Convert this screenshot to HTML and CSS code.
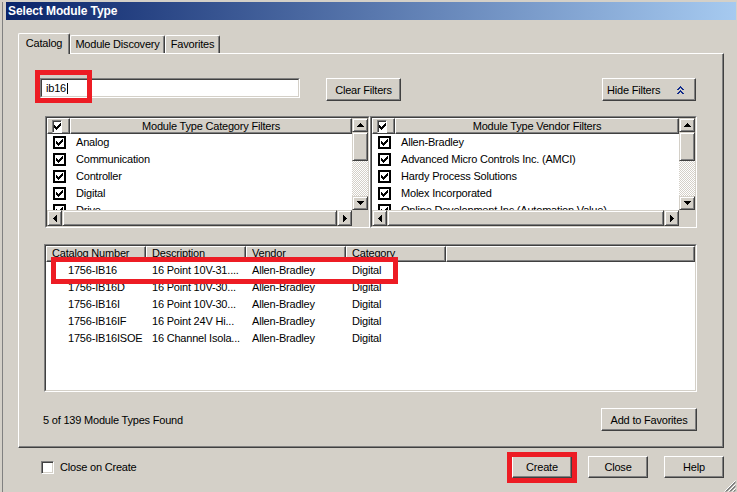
FILE: index.html
```html
<!DOCTYPE html>
<html>
<head>
<meta charset="utf-8">
<title>Select Module Type</title>
<link rel="stylesheet" href="styles.css">
</head>
<body>
<svg class="defs" width="0" height="0" aria-hidden="true">
  <symbol id="chk" viewBox="0 0 7 7"><path d="M6 0h1v1h-1z M5 1h2v1h-2z M0 2h1v1h-1z M4 2h3v1h-3z M0 3h2v1h-2z M3 3h3v1h-3z M0 4h5v1h-5z M1 5h3v1h-3z M2 6h1v1h-1z"/></symbol>
  <symbol id="up" viewBox="0 0 7 4"><path d="M3 0h1v1h1v1h1v1h1v1H0V3h1V2h1V1h1z"/></symbol>
  <symbol id="down" viewBox="0 0 7 4"><path d="M0 0h7v1H6v1H5v1H4v1H3V3H2V2H1V1H0z"/></symbol>
  <symbol id="left" viewBox="0 0 4 7"><path d="M3 0h1v7H3V6H2V5H1V4H0V3h1V2h1V1h1z"/></symbol>
  <symbol id="right" viewBox="0 0 4 7"><path d="M0 0h1v1h1v1h1v1h1v1H3v1H2v1H1v1H0z"/></symbol>
</svg>
<div class="window">
  <div class="frame">
    <div class="titlebar">Select Module Type</div>
    <div class="tabs">
      <div class="tab tab-active">Catalog</div>
      <div class="tab tab-md">Module Discovery</div>
      <div class="tab tab-fav">Favorites</div>
    </div>
    <div class="panel">
      <div class="search-row">
        <div class="field-wrap">
          <div class="textfield"><div class="textfield-in">ib16<span class="caret"></span></div></div>
          <div class="mark mark-search"></div>
        </div>
        <button class="btn btn-clear">Clear Filters</button>
        <button class="btn btn-hide"><span>Hide Filters</span>
          <svg class="chev" width="7" height="8" viewBox="0 0 7 8"><path d="M3 0h1v1H3z M2 1h3v1H2z M1 2h2v1H1z M4 2h2v1H4z M0 3h2v1H0z M5 3h2v1H5z M3 4h1v1H3z M2 5h3v1H2z M1 6h2v1H1z M4 6h2v1H4z M0 7h2v1H0z M5 7h2v1H5z"/></svg>
        </button>
      </div>

      <div class="filter-row">
        <div class="fbox fbox-cat">
          <div class="fbox-in">
            <div class="fmain">
              <div class="fhead">
                <div class="fhead-chk"><span class="chk3d"><svg class="ck"><use href="#chk"/></svg></span></div>
                <div class="fhead-title">Module Type Category Filters</div>
              </div>
              <div class="fitem"><span class="cb"><svg class="ck"><use href="#chk"/></svg></span><span class="flabel">Analog</span></div>
              <div class="fitem"><span class="cb"><svg class="ck"><use href="#chk"/></svg></span><span class="flabel">Communication</span></div>
              <div class="fitem"><span class="cb"><svg class="ck"><use href="#chk"/></svg></span><span class="flabel">Controller</span></div>
              <div class="fitem"><span class="cb"><svg class="ck"><use href="#chk"/></svg></span><span class="flabel">Digital</span></div>
              <div class="fitem"><span class="cb"><svg class="ck"><use href="#chk"/></svg></span><span class="flabel">Drive</span></div>
            </div>
            <div class="vscroll">
              <div class="sbtn sbtn-v"><svg class="arr-v"><use href="#up"/></svg></div>
              <div class="sthumb-v"></div>
              <div class="strack"></div>
              <div class="sbtn sbtn-v"><svg class="arr-v"><use href="#down"/></svg></div>
            </div>
            <div class="hscroll">
              <div class="sbtn sbtn-h"><svg class="arr-h"><use href="#left"/></svg></div>
              <div class="sthumb-h"></div>
              <div class="sbtn sbtn-h"><svg class="arr-h"><use href="#right"/></svg></div>
            </div>
            <div class="corner"></div>
          </div>
        </div>

        <div class="fbox fbox-ven">
          <div class="fbox-in">
            <div class="fmain">
              <div class="fhead">
                <div class="fhead-chk"><span class="chk3d"><svg class="ck"><use href="#chk"/></svg></span></div>
                <div class="fhead-title">Module Type Vendor Filters</div>
              </div>
              <div class="fitem"><span class="cb"><svg class="ck"><use href="#chk"/></svg></span><span class="flabel">Allen-Bradley</span></div>
              <div class="fitem"><span class="cb"><svg class="ck"><use href="#chk"/></svg></span><span class="flabel">Advanced Micro Controls Inc. (AMCI)</span></div>
              <div class="fitem"><span class="cb"><svg class="ck"><use href="#chk"/></svg></span><span class="flabel">Hardy Process Solutions</span></div>
              <div class="fitem"><span class="cb"><svg class="ck"><use href="#chk"/></svg></span><span class="flabel">Molex Incorporated</span></div>
              <div class="fitem"><span class="cb"><svg class="ck"><use href="#chk"/></svg></span><span class="flabel">Online Development Inc (Automation Value)</span></div>
            </div>
            <div class="vscroll">
              <div class="sbtn sbtn-v"><svg class="arr-v"><use href="#up"/></svg></div>
              <div class="sthumb-v"></div>
              <div class="strack"></div>
              <div class="sbtn sbtn-v"><svg class="arr-v"><use href="#down"/></svg></div>
            </div>
            <div class="hscroll">
              <div class="sbtn sbtn-h"><svg class="arr-h"><use href="#left"/></svg></div>
              <div class="sthumb-h"></div>
              <div class="sbtn sbtn-h"><svg class="arr-h"><use href="#right"/></svg></div>
            </div>
            <div class="corner"></div>
          </div>
        </div>
      </div>

      <div class="lv">
        <div class="lv-in">
          <div class="lv-head">
            <div class="lv-hcell"><span>Catalog Number</span></div>
            <div class="lv-hcell"><span>Description</span></div>
            <div class="lv-hcell"><span>Vendor</span></div>
            <div class="lv-hcell"><span>Category</span></div>
            <div class="lv-hcell lv-hfill"></div>
          </div>
          <div class="lv-row"><span class="c c-cat">1756-IB16</span><span class="c">16 Point 10V-31....</span><span class="c">Allen-Bradley</span><span class="c">Digital</span></div>
          <div class="lv-row"><span class="c c-cat">1756-IB16D</span><span class="c">16 Point 10V-30...</span><span class="c">Allen-Bradley</span><span class="c">Digital</span></div>
          <div class="lv-row"><span class="c c-cat">1756-IB16I</span><span class="c">16 Point 10V-30...</span><span class="c">Allen-Bradley</span><span class="c">Digital</span></div>
          <div class="lv-row"><span class="c c-cat">1756-IB16IF</span><span class="c">16 Point 24V Hi...</span><span class="c">Allen-Bradley</span><span class="c">Digital</span></div>
          <div class="lv-row"><span class="c c-cat">1756-IB16ISOE</span><span class="c">16 Channel Isola...</span><span class="c">Allen-Bradley</span><span class="c">Digital</span></div>
        </div>
        <div class="mark mark-row"></div>
      </div>

      <div class="status-row">
        <div class="status-text">5 of 139 Module Types Found</div>
        <button class="btn btn-fav">Add to Favorites</button>
      </div>
    </div>

    <div class="bottom-row">
      <span class="cb3d"></span>
      <span class="cb-label">Close on Create</span>
      <div class="actions">
        <div class="create-wrap">
          <button class="btn btn-act">Create</button>
          <div class="mark mark-create"></div>
        </div>
        <button class="btn btn-act">Close</button>
        <button class="btn btn-act">Help</button>
      </div>
    </div>
  </div>
  <svg class="grip" width="12" height="12" viewBox="0 0 12 12">
    <path stroke="#ffffff" stroke-width="1" d="M11.5 0.5L0.5 11.5 M11.5 4.5L4.5 11.5 M11.5 8.5L8.5 11.5"/>
    <path stroke="#808080" stroke-width="1" d="M11.5 1.5L1.5 11.5 M11.5 2.5L2.5 11.5 M11.5 5.5L5.5 11.5 M11.5 6.5L6.5 11.5 M11.5 9.5L9.5 11.5 M11.5 10.5L10.5 11.5"/>
  </svg>
</div>
</body>
</html>
```

FILE: styles.css
```css
* { box-sizing: border-box; }
html, body { margin: 0; padding: 0; }
body {
  background: #d4d0c8;
  font-family: "Liberation Sans", Arial, sans-serif;
  font-size: 11px;
  letter-spacing: -0.2px;
  color: #000;
}
.defs { position: absolute; width: 0; height: 0; overflow: hidden; }

.window {
  position: relative;
  width: 737px;
  height: 492px;
  padding: 2px 1px 0 2px;
  overflow: hidden;
}
.frame {
  height: 490px;
  border-left: 1px solid #808080;
  padding-left: 3px;
  display: flex;
  flex-direction: column;
}
.titlebar {
  height: 18px;
  line-height: 18px;
  padding-left: 2px;
  color: #fff;
  font-weight: bold;
  font-size: 12px;
  letter-spacing: -0.1px;
  background: linear-gradient(to right, #0a246a, #a6caf0);
  flex: none;
}

/* tabs */
.tabs {
  display: flex;
  align-items: flex-end;
  height: 20px;
  margin: 13px 0 0 12px;
  position: relative;
  z-index: 1;
  flex: none;
}
.tab {
  background: #d4d0c8;
  border-top: 1px solid #fff;
  border-left: 1px solid #fff;
  border-right: 1px solid #404040;
  box-shadow: inset -1px 0 #808080;
  border-radius: 2px 2px 0 0;
  text-align: center;
  line-height: 13px;
  white-space: nowrap;
}
.tab-active { width: 52px; height: 21px; margin-bottom: -1px; padding-top: 3px; }
.tab-md { width: 95px; height: 18px; padding-top: 2px; }
.tab-fav { width: 55px; height: 18px; padding-top: 2px; }

/* panel */
.panel {
  width: 706px;
  height: 395px;
  margin-left: 12px;
  border: 1px solid;
  border-color: #fff #404040 #404040 #fff;
  box-shadow: inset -1px -1px #808080;
  display: flex;
  flex-direction: column;
  flex: none;
}

/* buttons */
.btn {
  font: inherit;
  letter-spacing: inherit;
  color: #000;
  background: #d4d0c8;
  margin: 0;
  padding: 0;
  border: 1px solid;
  border-color: #fff #404040 #404040 #fff;
  box-shadow: inset -1px -1px #808080;
  text-align: center;
  white-space: nowrap;
  flex: none;
}

.search-row {
  display: flex;
  align-items: flex-start;
  height: 23px;
  margin: 24px 27px 0 21px;
  flex: none;
}
.field-wrap { position: relative; flex: none; }
.textfield {
  width: 260px;
  height: 20px;
  border: 1px solid;
  border-color: #808080 #fff #fff #808080;
}
.textfield-in {
  height: 18px;
  border: 1px solid;
  border-color: #404040 #d4d0c8 #d4d0c8 #404040;
  background: #fff;
  padding: 1px 0 0 4px;
  line-height: 14px;
  white-space: nowrap;
}
.caret {
  display: inline-block;
  width: 1px;
  height: 11px;
  background: #000;
  margin-left: 1px;
  vertical-align: -2px;
}
.btn-clear { width: 75px; height: 23px; margin-left: 26px; }
.btn-hide {
  width: 94px;
  height: 23px;
  margin-left: auto;
  display: flex;
  align-items: center;
  justify-content: space-between;
  padding: 0 11px 0 4px;
}
.chev { fill: #122c8c; display: block; shape-rendering: crispEdges; }

/* red marks */
.mark {
  position: absolute;
  border: 5px solid #ed1c24;
  pointer-events: none;
}
.mark-search { left: -5px; top: -8px; width: 57px; height: 33px; }
.mark-row { left: 6px; top: 12px; width: 347px; height: 27px; }
.mark-create { left: -5px; top: -4px; width: 70px; height: 31px; }

/* filter boxes */
.filter-row {
  display: flex;
  height: 112px;
  margin: 15px 0 0 26px;
  flex: none;
}
.fbox {
  height: 112px;
  border: 1px solid;
  border-color: #808080 #fff #fff #808080;
  flex: none;
}
.fbox-cat { width: 325px; }
.fbox-ven { width: 327px; }
.fbox-in {
  height: 110px;
  border: 1px solid;
  border-color: #404040 #d4d0c8 #d4d0c8 #404040;
  display: grid;
  grid-template-columns: 1fr 16px;
  grid-template-rows: 92px 16px;
}
.fmain { background: #fff; overflow: hidden; }
.fhead { display: flex; height: 16px; }
.fhead-chk, .fhead-title, .lv-hcell {
  background: #d4d0c8;
  border: 1px solid;
  border-color: #fff #404040 #404040 #fff;
  box-shadow: inset -1px -1px #808080;
}
.fhead-chk {
  width: 23px;
  display: flex;
  align-items: center;
  padding-left: 4px;
  flex: none;
}
.chk3d {
  width: 10px;
  height: 13px;
  border: 1px solid;
  border-color: #808080 #fff #fff #808080;
  box-shadow: inset 1px 1px #404040;
  background: #fff;
  display: flex;
  align-items: center;
  justify-content: center;
}
.fhead-title {
  flex: 1;
  text-align: center;
  line-height: 13px;
  padding-top: 1px;
  white-space: nowrap;
  overflow: hidden;
}
.fitem {
  display: flex;
  align-items: center;
  height: 17px;
  padding-left: 6px;
  white-space: nowrap;
}
.cb {
  width: 13px;
  height: 13px;
  border: 2px solid #000;
  background: #fff;
  display: flex;
  align-items: center;
  justify-content: center;
  flex: none;
}
.ck { width: 7px; height: 7px; fill: #000; display: block; shape-rendering: crispEdges; }
.flabel { margin-left: 10px; line-height: 17px; }

/* scrollbars */
.vscroll { display: flex; flex-direction: column; }
.hscroll {
  display: flex;
  background: repeating-conic-gradient(#fff 0 25%, #d4d0c8 0 50%) 0 0 / 2px 2px;
}
.sbtn, .sthumb-v, .sthumb-h {
  background: #d4d0c8;
  border: 1px solid;
  border-color: #d4d0c8 #404040 #404040 #d4d0c8;
  box-shadow: inset 1px 1px #fff, inset -1px -1px #808080;
  flex: none;
}
.sbtn { display: flex; align-items: center; justify-content: center; }
.sbtn-v { height: 14px; }
.sbtn-h { width: 15px; }
.arr-v { width: 7px; height: 4px; fill: #000; display: block; shape-rendering: crispEdges; }
.arr-h { width: 4px; height: 7px; fill: #000; display: block; shape-rendering: crispEdges; }
.sthumb-v { height: 29px; }
.sthumb-h { flex: 1; }
.strack {
  flex: 1;
  background: repeating-conic-gradient(#fff 0 25%, #d4d0c8 0 50%) 0 0 / 2px 2px;
}
.corner { background: #d4d0c8; }

/* list view */
.lv {
  position: relative;
  width: 653px;
  height: 148px;
  margin: 16px 0 0 25px;
  border: 1px solid;
  border-color: #808080 #fff #fff #808080;
  flex: none;
}
.lv-in {
  height: 146px;
  border: 1px solid;
  border-color: #404040 #d4d0c8 #d4d0c8 #404040;
  background: #fff;
  overflow: hidden;
}
.lv-head { display: flex; height: 16px; }
.lv-hcell {
  width: 100px;
  height: 16px;
  padding-left: 5px;
  flex: none;
  overflow: hidden;
  white-space: nowrap;
}
.lv-hcell span {
  display: block;
  height: 11px;
  line-height: 13px;
  overflow: hidden;
}
.lv-hfill { flex: 1; width: auto; }
.lv-row {
  display: flex;
  height: 17px;
  line-height: 17px;
  white-space: nowrap;
}
.c { width: 100px; padding-left: 6px; overflow: hidden; flex: none; }
.c-cat { padding-left: 22px; }

/* status */
.status-row {
  display: flex;
  height: 23px;
  margin: 16px 26px 0 24px;
  flex: none;
}
.status-text { padding-top: 6px; line-height: 13px; white-space: nowrap; }
.btn-fav { width: 96px; height: 23px; margin-left: auto; }

/* bottom */
.bottom-row {
  display: flex;
  align-items: center;
  height: 22px;
  margin-top: 8px;
  padding: 0 12px 0 35px;
  flex: none;
}
.cb3d {
  width: 13px;
  height: 13px;
  border: 1px solid;
  border-color: #808080 #fff #fff #808080;
  box-shadow: inset 1px 1px #404040, inset -1px -1px #d4d0c8;
  background: #fff;
  flex: none;
}
.cb-label { margin-left: 6px; white-space: nowrap; }
.actions { margin-left: auto; display: flex; gap: 16px; }
.create-wrap { position: relative; }
.btn-act { width: 60px; height: 22px; display: block; }

.grip { position: absolute; right: 1px; bottom: 0; display: block; }
```
